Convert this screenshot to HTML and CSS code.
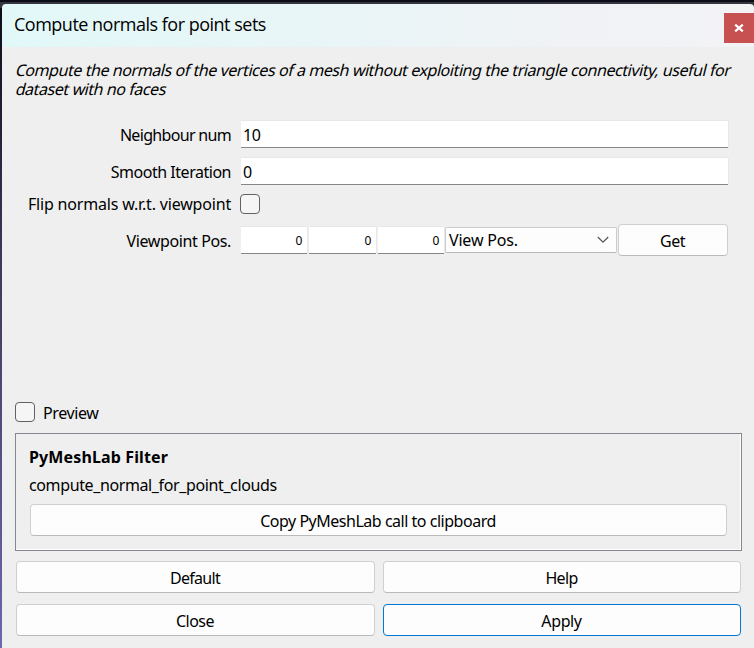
FILE: index.html
```html
<!DOCTYPE html>
<html lang="en">
<head>
<meta charset="utf-8">
<title>Compute normals for point sets</title>
<link rel="stylesheet" href="styles.css">
</head>
<body>
<main class="window">
  <header class="titlebar">
    <h1>Compute normals for point sets</h1>
    <button class="close" aria-label="Close window"><svg width="10" height="8" viewBox="0 0 10 8"><path d="M1.2 .6 8.8 7.4M8.8 .6 1.2 7.4" stroke="#fff" stroke-width="2.2"/></svg></button>
  </header>
  <section class="content">
    <p class="description"><span class="slant">Compute the normals of the vertices of a mesh without exploiting the triangle connectivity, useful for</span><span class="slant">dataset with no faces</span></p>
    <div class="form">
      <div class="row"><span class="label tight">Neighbour num</span><div class="field">10</div></div>
      <div class="row"><span class="label">Smooth Iteration</span><div class="field">0</div></div>
      <div class="row flip"><span class="label wide">Flip normals w.r.t. viewpoint</span><span class="check"></span></div>
      <div class="row view"><span class="label medium">Viewpoint Pos.</span>
        <div class="point"><div class="coord">0</div><div class="coord">0</div><div class="coord">0</div>
          <div class="combo wide">View Pos.<svg width="12" height="8" viewBox="0 0 12 8"><path d="M.8 1 6 6.2 11.2 1" fill="none" stroke="#555" stroke-width="1.2"/></svg></div>
          <button class="button get">Get</button></div>
      </div>
    </div>
    <div class="preview medium"><span class="check"></span><span class="caption">Preview</span></div>
    <section class="group">
      <h2>PyMeshLab Filter</h2>
      <p class="name medium">compute_normal_for_point_clouds</p>
      <button class="button">Copy PyMeshLab call to clipboard</button>
    </section>
    <div class="actions">
      <button class="button tight">Default</button><button class="button tight">Help</button>
      <button class="button">Close</button><button class="button medium primary">Apply</button>
    </div>
  </section>
</main>
</body>
</html>
```

FILE: styles.css
```css
* { box-sizing: border-box; }
body { margin: 0; background: linear-gradient(#0c0b18, #3c395a 40%, #6b68ac); font: 16px/20px "Noto Sans", sans-serif; color: #000; letter-spacing: -.48px; overflow: hidden; }
h1, h2, p { margin: 0; font-size: inherit; font-weight: inherit; }
button { font: inherit; color: inherit; letter-spacing: inherit; padding: 0; }
.tight { letter-spacing: -.68px; }
.medium { letter-spacing: -.38px; }
.wide { letter-spacing: -.18px; }
.window { height: 648px; padding: 2px 0 0 2px; border-top: 2px solid #0c0b18; background: linear-gradient(#34353d 0 6px, transparent 6px); }
.titlebar { height: 43px; display: flex; align-items: center; justify-content: space-between; padding-left: 12px; background: linear-gradient(90deg, #e2f8f8, #e9f5f7 45%, #f0f2f5 75%, #f3f3f6); border-radius: 4px 4px 0 0; }
.titlebar h1 { font: 18px/24px "Open Sans", sans-serif; letter-spacing: -.5px; padding-bottom: 3px; }
.close { width: 30px; height: 30px; border: 0; background: #c75050; display: grid; place-items: center; margin-top: 5px; }
.content { height: 601px; background: #efefef; padding: 14px 12px 0 13px; display: flex; flex-direction: column; }
.description { line-height: 19px; white-space: nowrap; padding-left: 1px; height: 38px; letter-spacing: -.43px; }
.slant { display: block; width: max-content; transform: skewX(-14deg); }
.form { margin-top: 22px; height: 281px; }
.row { display: grid; grid-template-columns: 216px 487px; column-gap: 10px; height: 27px; align-items: center; margin-bottom: 10px; }
.row.flip { height: 20px; margin: -1px 0 10px; }
.flip .label { padding-top: 1px; line-height: 19px; }
.row.view { height: 32px; margin: 0; }
.view .label { padding-top: 1px; }
.label { text-align: right; white-space: nowrap; }
.field, .coord { height: 27px; background: #fff; border-bottom: 1px solid #868686; padding: 4px 2px 0; line-height: 20px; }
.field { box-shadow: 0 -1px #e8e8e8, 1px 0 #e8e8e8; }
.check { display: block; width: 20px; height: 20px; border: 1px solid #626262; border-radius: 4px; background: #f5f5f5; flex: none; }
.flip .check { margin-left: -1px; }
.point { display: grid; grid-template-columns: 66px 67px 66px 171px 110px; column-gap: 2px; align-items: center; margin-right: -1px; }
.coord { font-size: 12px; text-align: right; padding-right: 5px; box-shadow: 0 -1px #e8e8e8, 1px 0 #e8e8e8; }
.combo { height: 26px; margin: 0 0 1px -1px; padding: 0 7px 0 3px; background: #fdfdfd; border: 1px solid #ccc; border-bottom-color: #b9b9b9; border-radius: 2px; display: flex; align-items: center; justify-content: space-between; white-space: nowrap; }
.button { height: 32px; width: 100%; background: #fdfdfd; border: 1px solid #d0d0d0; border-bottom-color: #bababa; border-radius: 4px; white-space: nowrap; padding: 2px 1px 0 0; }
.button.get { margin-left: -1px; }
.button.primary { border-color: #0078d4; }
.preview { display: flex; align-items: center; gap: 8px; height: 20px; }
.caption { padding-top: 2px; }
.group { margin: 11px 0 10px; width: 727px; height: 118px; border: 1px solid #828790; box-shadow: inset -1px -1px #fff; padding: 13px 14px 0; }
.group h2 { font-weight: 700; line-height: 20px; letter-spacing: .13px; margin-left: -1px; }
.name { margin: 8px 0 9px -1px; }
.actions { display: grid; grid-template-columns: 359px 358px; gap: 11px 8px; padding-left: 1px; }
```
